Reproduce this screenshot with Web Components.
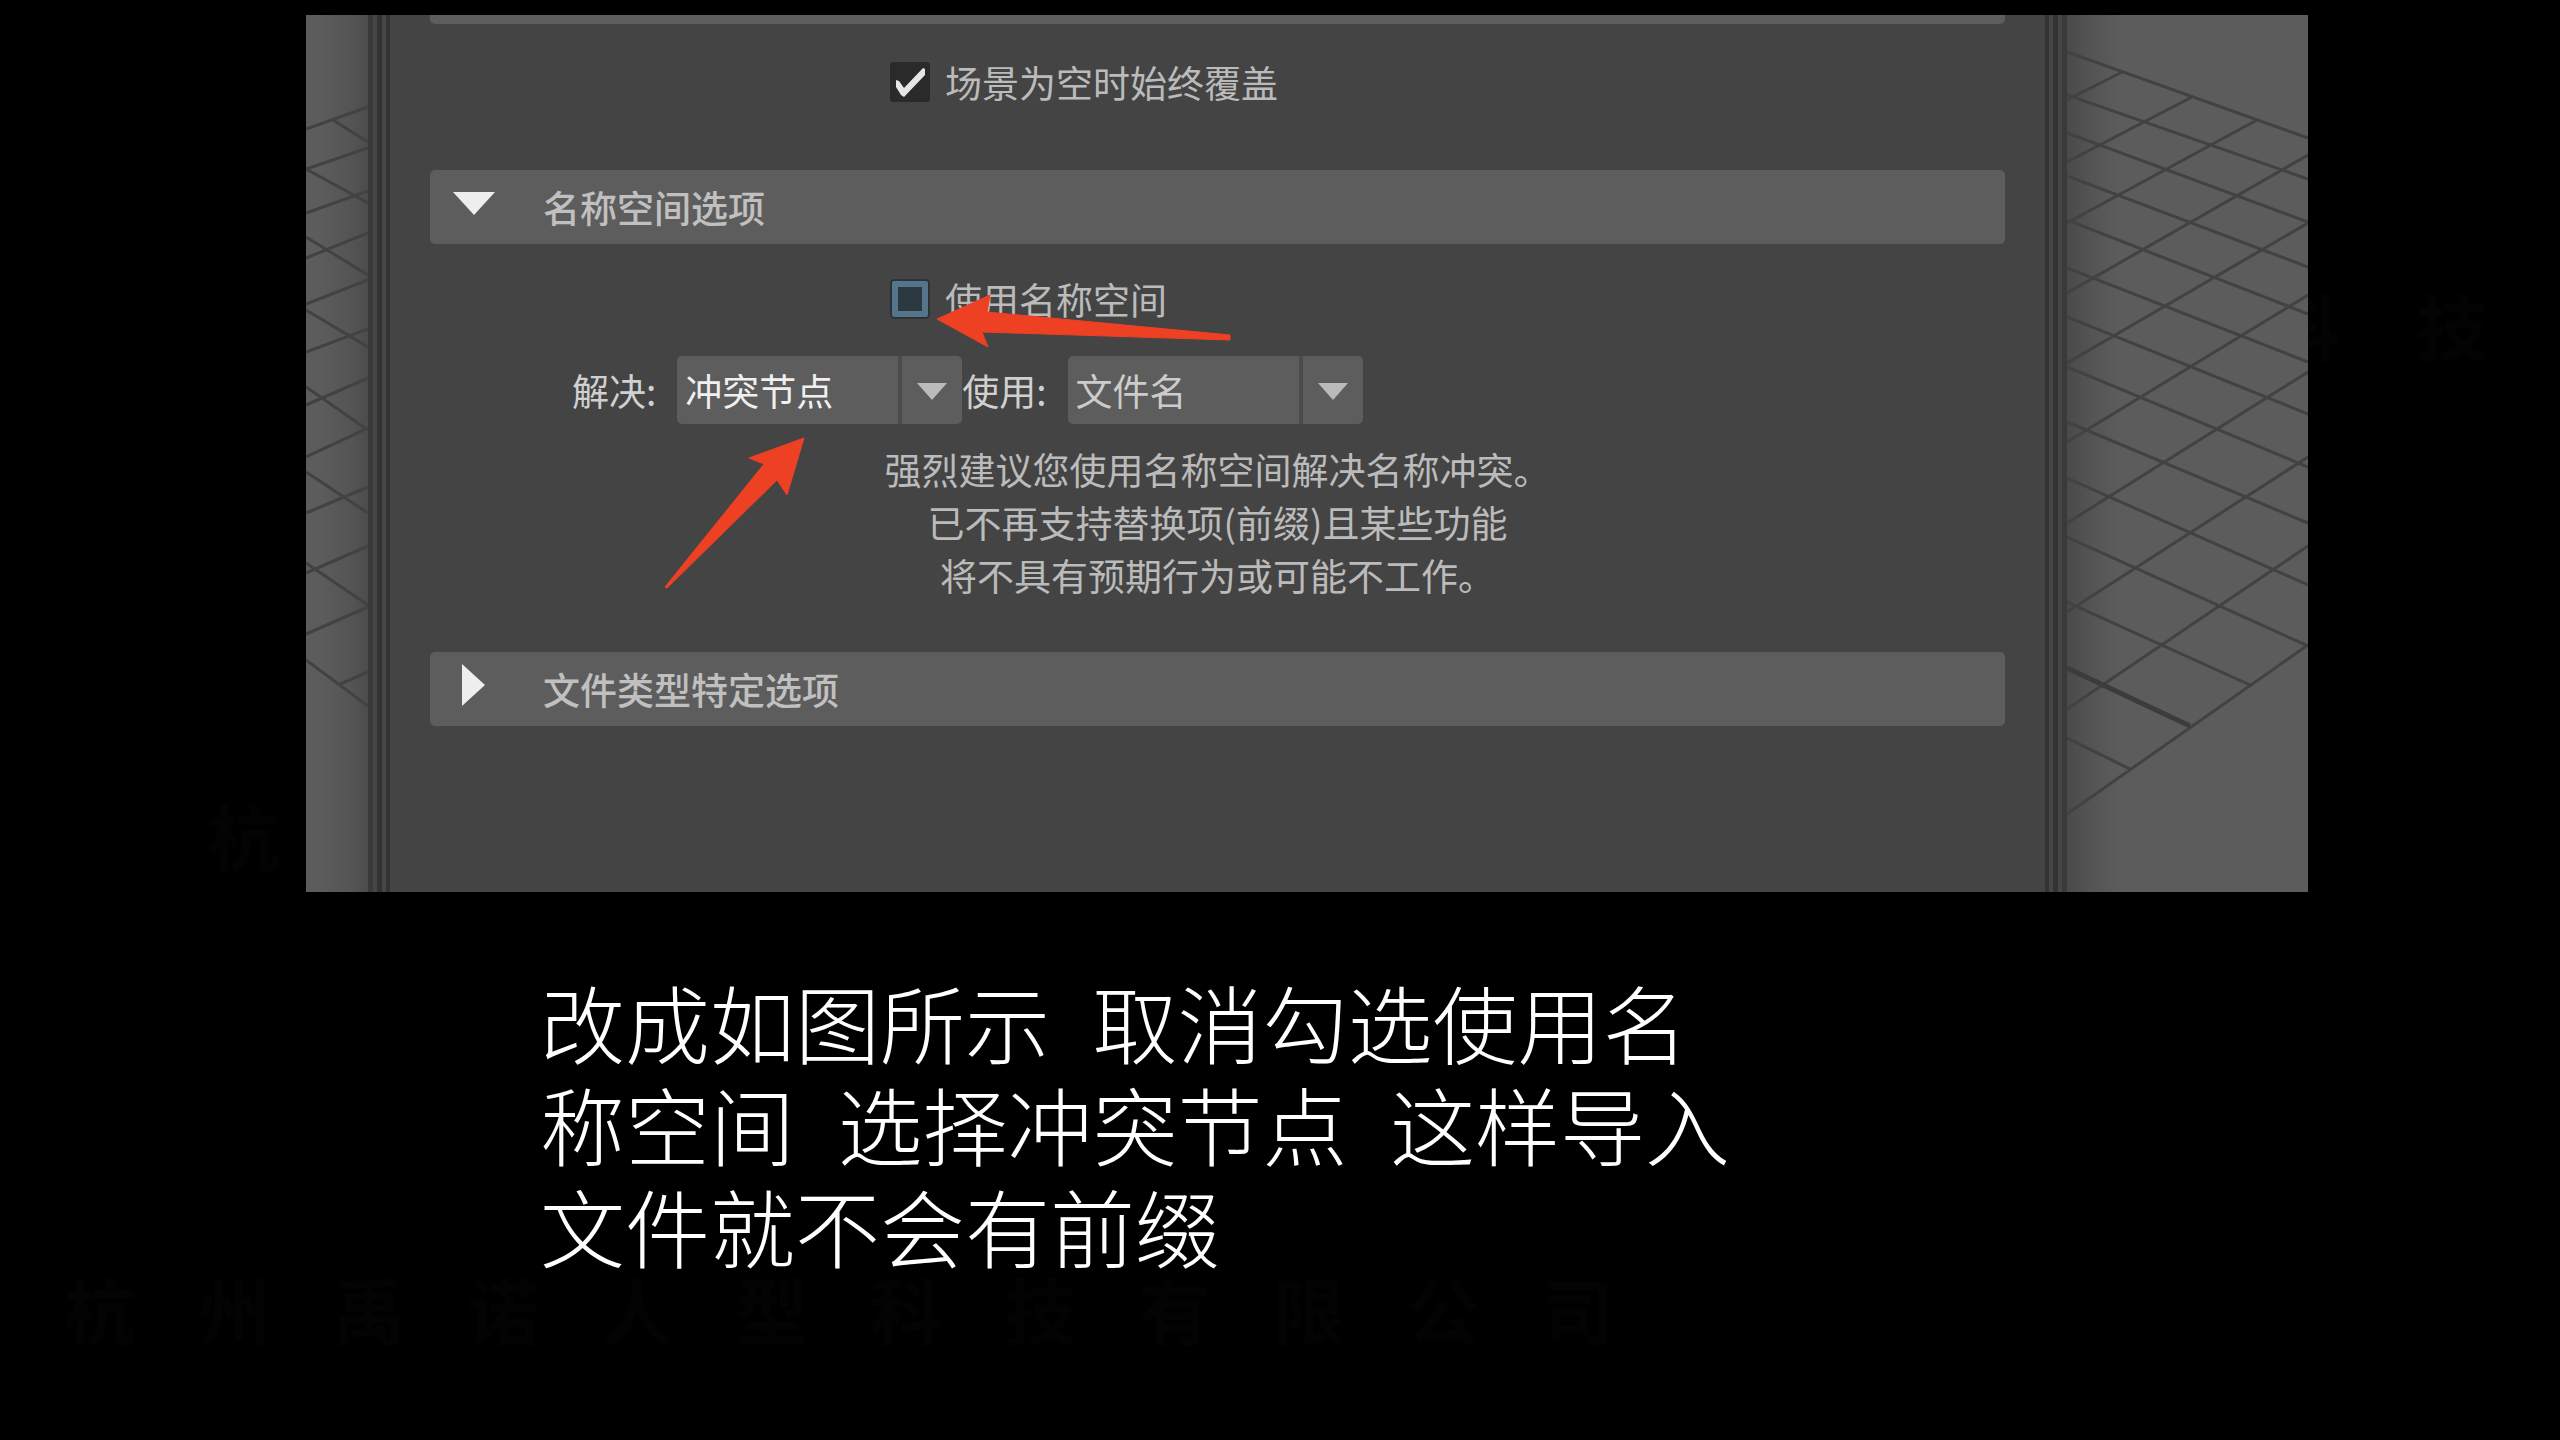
<!DOCTYPE html>
<html lang="zh-CN">
<head>
<meta charset="utf-8">
<meta name="viewport" content="width=device-width, initial-scale=1">
<title>名称空间选项</title>
<style>
  body {
    margin: 0;
    background: #000;
    font-family: 'Noto Sans CJK SC', sans-serif;
  }
</style>
</head>
<body>
<tutorial-slide>
  <water-mark slot="marks" class="wide">杭州禹诺人型科技有限公司</water-mark>
  <water-mark slot="marks" class="left">杭</water-mark>
  <water-mark slot="marks" class="right">科技</water-mark>

  <viewport-grid slot="shot" side="left"></viewport-grid>
  <options-panel slot="shot">
    <check-row checked>场景为空时始终覆盖</check-row>
    <option-section open>
      <span slot="title">名称空间选项</span>
      <check-row>使用名称空间</check-row>
      <field-row>
        <drop-down label="解决:" value="冲突节点" class="active"></drop-down>
        <drop-down label="使用:" value="文件名" class="wide"></drop-down>
      </field-row>
      <help-note>强烈建议您使用名称空间解决名称冲突。<br>已不再支持替换项(前缀)且某些功能<br>将不具有预期行为或可能不工作。</help-note>
    </option-section>
    <option-section>
      <span slot="title">文件类型特定选项</span>
    </option-section>
    <pointer-arrows slot="overlay"></pointer-arrows>
  </options-panel>
  <viewport-grid slot="shot" side="right"></viewport-grid>

  <slide-caption slot="caption">改成如图所示  取消勾选使用名<br>称空间  选择冲突节点  这样导入<br>文件就不会有前缀</slide-caption>
</tutorial-slide>

<script>
const define = (name, html, setup) => {
  const template = document.createElement('template');
  template.innerHTML = html.trim();
  customElements.define(name, class extends HTMLElement {
    connectedCallback() {
      if (this.shadowRoot) return;
      const root = this.attachShadow({ mode: 'open' });
      root.appendChild(template.content.cloneNode(true));
      if (setup) setup(this, root);
    }
  });
};

define('tutorial-slide', `
<style>
  :host {
    display: block;
    position: relative;
    isolation: isolate;
    min-height: 100vh;
    box-sizing: border-box;
    padding: 15px 252px 0 306px;
    overflow: hidden;
  }
  .shot {
    display: grid;
    grid-template-columns: 62px minmax(0, 1fr) 241px;
    background: #5c5c5c;
  }
</style>
<slot name="marks"></slot>
<div class="shot"><slot name="shot"></slot></div>
<slot name="caption"></slot>
`);

define('water-mark', `
<style>
  :host {
    position: absolute;
    z-index: -1;
    font-size: 72px;
    line-height: 72px;
    font-weight: 700;
    color: #030303;
    white-space: nowrap;
  }
  :host(.wide) {
    left: 64px;
    bottom: 96px;
    width: 1550px;
    text-align: justify;
    text-align-last: justify;
  }
  :host(.left) { left: 208px; top: 798px; }
  :host(.right) {
    right: 72px;
    top: 288px;
    width: 220px;
    text-align: justify;
    text-align-last: justify;
  }
</style>
<slot></slot>
`);

define('slide-caption', `
<style>
  :host {
    display: block;
    padding: 86px 0 0 234px;
    font-family: 'Liberation Serif', 'Noto Sans CJK SC', serif;
    font-size: 85px;
    font-weight: 300;
    line-height: 102px;
    color: #fff;
  }
  div { white-space: pre; }
</style>
<div><slot></slot></div>
`);

// ground plane seen on both sides of the dialog
const gridLines = {
  left: {
    width: 62,
    thin: 'M0 114L62 92M0 154L62 133M0 198L62 176M0 243L62 218M0 289L62 265M0 337L62 314M0 390L62 363M0 442L62 413M0 498L62 472M0 558L62 531M0 619L62 592M32 670L62 657' +
      'M27 105L62 127M0 154L62 188M0 222L62 260M0 295L62 332M0 372L62 415M0 457L62 498M0 548L62 590M0 645L62 691',
    axis: ''
  },
  right: {
    width: 241,
    thin: 'M0 37L241 123M0 80L241 164M0 118L241 207M0 161L241 252M0 205L241 299M0 253L241 347M0 302L241 399M0 352L241 452M0 407L241 508M0 463L241 570M0 522L241 631M0 587L183 670M0 723L63 754' +
      'M0 85L55 57M0 147L125 82M0 208L190 105M0 278L241 140M0 348L241 208M0 427L241 280M0 508L241 357M0 597L241 442M0 694L241 531M0 799L241 630',
    axis: 'M0 653L123 711'
  }
};

define('viewport-grid', `
<style>
  :host { display: block; background: linear-gradient(to right, #4a4a4a, #545454 24px, #5c5c5c 52px); }
  :host([side="left"]) { background: linear-gradient(to left, #4c4c4c, #545454 16px, #5c5c5c 48px); }
  svg { display: block; fill: none; stroke: #424242; }
</style>
<svg height="877" aria-hidden="true">
  <path class="thin" stroke-width="3"/>
  <path class="axis" stroke-width="5" stroke="#3c3c3c"/>
</svg>
`, (el, root) => {
  const lines = gridLines[el.getAttribute('side')];
  root.querySelector('svg').setAttribute('width', lines.width);
  root.querySelector('.thin').setAttribute('d', lines.thin);
  root.querySelector('.axis').setAttribute('d', lines.axis);
});

define('options-panel', `
<style>
  :host {
    --edge: #3a3a3a 0 5px, #464646 5px 9px, #333 9px 14px, #464646 14px 18px, #333 18px 22px, #444 22px;
    display: block;
    position: relative;
    box-sizing: border-box;
    padding: 0 62px 165px;
    background:
      linear-gradient(to right, var(--edge)) left / 24px 100% no-repeat,
      linear-gradient(to left, var(--edge)) right / 24px 100% no-repeat,
      #444;
    color: #bbb;
    font-size: 37px;
  }
  .previous {
    height: 9px;
    margin-bottom: 38px;
    border-radius: 0 0 5px 5px;
    background: #5d5d5d;
  }
</style>
<div class="previous"></div>
<slot></slot>
<slot name="overlay"></slot>
`);

define('option-section', `
<style>
  :host { display: block; margin-top: 68px; }
  :host(:not([open])) { margin-top: 50px; }
  button {
    display: flex;
    align-items: center;
    gap: 47px;
    width: 100%;
    height: 74px;
    padding: 0 22px;
    border: 0;
    border-radius: 5px;
    background: #5d5d5d;
    color: #c0c0c0;
    font: inherit;
    font-weight: 500;
    line-height: 74px;
    text-align: left;
  }
  svg { flex: none; padding-bottom: 8px; fill: #eee; }
  .body { padding-top: 35px; }
  :host(:not([open])) .body { display: none; }
</style>
<button type="button">
  <svg width="44" height="44" aria-hidden="true"><path/></svg>
  <slot name="title"></slot>
</button>
<div class="body"><slot></slot></div>
`, (el, root) => {
  const button = root.querySelector('button');
  const render = () => {
    const open = el.hasAttribute('open');
    button.setAttribute('aria-expanded', open);
    root.querySelector('path').setAttribute('d', open ? 'M1 11H43L22 34Z' : 'M10 1V43L33 22Z');
  };
  button.addEventListener('click', () => {
    el.toggleAttribute('open');
    render();
  });
  render();
});

define('check-row', `
<style>
  :host { display: flex; padding-left: 460px; }
  label { display: flex; align-items: center; gap: 15px; line-height: 40px; }
  .box { display: grid; }
  .box > * { grid-area: 1 / 1; }
  input {
    appearance: none;
    box-sizing: border-box;
    width: 40px;
    height: 40px;
    margin: 0;
    border: 8px solid #54758a;
    border-radius: 4px;
    outline: 2px solid #2c3338;
    outline-offset: -2px;
    background: #2d3940;
  }
  input:checked { border-color: #2a2a2a; background: #2a2a2a; outline-color: #2a2a2a; }
  svg { fill: #e6e6e6; pointer-events: none; visibility: hidden; }
  input:checked + svg { visibility: visible; }
</style>
<label>
  <span class="box">
    <input type="checkbox">
    <svg width="40" height="40" aria-hidden="true"><path d="M6 18L9 19L14 26L33 6L35 7V13L14 35L11 33L6 25Z"/></svg>
  </span>
  <slot></slot>
</label>
`, (el, root) => {
  root.querySelector('input').checked = el.hasAttribute('checked');
});

define('field-row', `
<style>
  :host { display: flex; padding: 37px 0 19px 142px; }
</style>
<slot></slot>
`);

define('drop-down', `
<style>
  :host { display: flex; align-items: center; gap: 21px; color: #d0d0d0; }
  label { line-height: 68px; }
  .box { display: grid; grid-template-columns: 221px 64px; }
  :host(.wide) .box { grid-template-columns: 231px 64px; }
  select {
    grid-area: 1 / 1 / 2 / 3;
    appearance: none;
    height: 68px;
    margin: 0;
    padding: 0 8px;
    border: 0;
    border-radius: 5px;
    background: #5d5d5d;
    color: #ccc;
    font: inherit;
  }
  :host(.active) select { color: #f0f0f0; }
  svg {
    grid-area: 1 / 2;
    box-sizing: border-box;
    border-left: 4px solid #4c4c4c;
    fill: #bbb;
    pointer-events: none;
  }
</style>
<label for="field"></label>
<span class="box">
  <select id="field"></select>
  <svg width="64" height="68" aria-hidden="true"><path d="M15 27H45L30 44Z"/></svg>
</span>
`, (el, root) => {
  root.querySelector('label').textContent = el.getAttribute('label');
  root.querySelector('select').add(new Option(el.getAttribute('value')));
});

define('help-note', `
<style>
  :host { display: block; line-height: 53px; text-align: center; }
</style>
<slot></slot>
`);

define('pointer-arrows', `
<style>
  :host { position: absolute; left: 0; top: 0; pointer-events: none; }
  svg { display: block; fill: #ee4023; stroke: #ee4023; stroke-linejoin: round; }
</style>
<svg width="880" height="600" aria-hidden="true">
  <path d="M569 304L622 280L619 297L862 320V325L614 317L620 332Z"/>
  <path d="M436 423L381 443L396 449L297 572L299 573L409 465L419 480Z"/>
</svg>
`);
</script>
</body>
</html>
